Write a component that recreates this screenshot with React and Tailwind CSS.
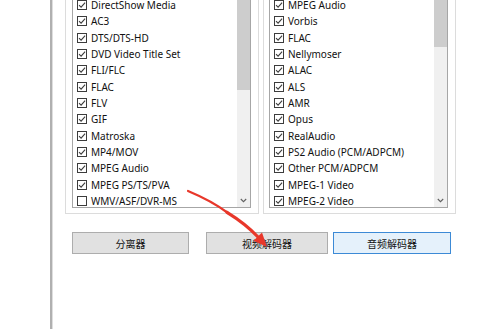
const leftItems = [
  ["DirectShow Media", true],
  ["AC3", true],
  ["DTS/DTS-HD", true],
  ["DVD Video Title Set", true],
  ["FLI/FLC", true],
  ["FLAC", true],
  ["FLV", true],
  ["GIF", true],
  ["Matroska", true],
  ["MP4/MOV", true],
  ["MPEG Audio", true],
  ["MPEG PS/TS/PVA", true],
  ["WMV/ASF/DVR-MS", false],
];

const rightItems = [
  ["MPEG Audio", true],
  ["Vorbis", true],
  ["FLAC", true],
  ["Nellymoser", true],
  ["ALAC", true],
  ["ALS", true],
  ["AMR", true],
  ["Opus", true],
  ["RealAudio", true],
  ["PS2 Audio (PCM/ADPCM)", true],
  ["Other PCM/ADPCM", true],
  ["MPEG-1 Video", true],
  ["MPEG-2 Video", true],
];

function Check({ on }) {
  return (
    <svg width="10" height="10" viewBox="0 0 10 10" className="shrink-0">
      <rect x="0.5" y="0.5" width="9" height="9" fill="#fff" stroke="#3c3c3c" />
      {on && <path d="M2 5.1 L4.1 7.2 L8.1 2.7" fill="none" stroke="#3c3c3c" strokeWidth="1.1" />}
    </svg>
  );
}

function ListBox({ items, thumb }) {
  return (
    <div className="flex h-[212px] border border-[#a6a6a6] bg-white">
      <div className="flex-1 overflow-hidden">
        {items.map(([label, on]) => (
          <div key={label} className="flex h-[16.33px] items-center gap-[4px] pl-[4px]">
            <Check on={on} />
            <span className="whitespace-nowrap leading-none">{label}</span>
          </div>
        ))}
      </div>
      <div className="flex w-[13px] flex-col bg-[#f0f0f0]">
        <div className={thumb + " bg-[#cdcdcd]"} />
        <div className="flex-1" />
        <div className="flex h-[13px] items-center justify-center">
          <svg width="7" height="5" viewBox="0 0 7 5">
            <path d="M0.8 1 L3.5 3.7 L6.2 1" fill="none" stroke="#606060" strokeWidth="1.1" />
          </svg>
        </div>
      </div>
    </div>
  );
}

export default function App() {
  return (
    <div className="relative flex h-[329px] w-[500px] overflow-hidden bg-white font-['Noto_Sans','Noto_Sans_CJK_SC',sans-serif] text-[10px] text-[#111]">
      <div className="w-[50px]" />
      <div className="w-[2px] bg-[#b0b0b0]" />
      <div className="w-[1px] bg-[#dedede]" />

      <div className="flex flex-1 flex-col">
        <div className="-mt-[4px] flex gap-[4px] pl-[12px]">
          <div className="w-[194px] border-x border-b border-[#dcdcdc] pb-[5px] pl-[6px] pr-[7px]">
            <ListBox items={leftItems} thumb="h-[93px]" />
          </div>
          <div className="w-[193px] border-x border-b border-[#dcdcdc] pb-[5px] pl-[5px] pr-[7px]">
            <ListBox items={rightItems} thumb="h-[50px]" />
          </div>
        </div>

        <div className="mt-[18px] flex pl-[19px] font-['Noto_Sans_CJK_SC',sans-serif]">
          <button type="button" className="flex h-[22px] w-[117px] items-center justify-center border border-[#adadad] bg-[#e1e1e1]">
            分离器
          </button>
          <button type="button" className="ml-[17px] flex h-[22px] w-[122px] items-center justify-center border border-[#adadad] bg-[#e1e1e1]">
            视频解码器
          </button>
          <button type="button" className="ml-[5px] flex h-[22px] w-[118px] items-center justify-center border border-[#3c8ad6] bg-[#e5f1fb]">
            音频解码器
          </button>
        </div>
      </div>

      {/* annotation arrow */}
      <svg className="pointer-events-none absolute left-0 top-0" width="500" height="329" viewBox="0 0 500 329">
        <path d="M188 191 Q212 201 228 213" fill="none" stroke="#e8372a" strokeWidth="2.2" strokeLinecap="round" />
        <path d="M227 212.3 Q246 224 258 237" fill="none" stroke="#e8372a" strokeWidth="3.2" strokeLinecap="round" />
        <polygon points="267,247 253.5,240.8 262,232.6" fill="#e8372a" />
      </svg>
    </div>
  );
}
